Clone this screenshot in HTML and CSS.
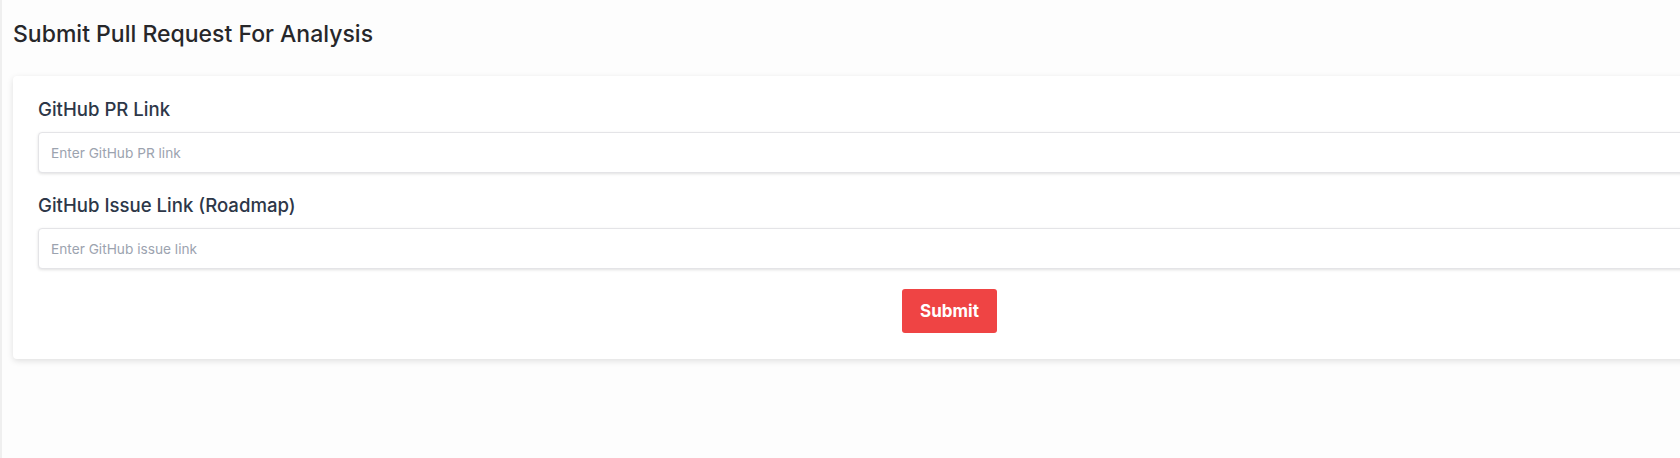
FILE: index.html
```html
<!DOCTYPE html>
<html>
<head>
<meta charset="utf-8">
<link rel="stylesheet" href="styles.css">
</head>
<body>
<div class="page">
  <h1 class="title">Submit Pull Request For Analysis</h1>
  <div class="card">
    <label class="label" for="pr">GitHub PR Link</label>
    <input class="input" id="pr" type="text" placeholder="Enter GitHub PR link">
    <label class="label label-second" for="issue">GitHub Issue Link (Roadmap)</label>
    <input class="input" id="issue" type="text" placeholder="Enter GitHub issue link">
    <div class="actions">
      <button class="btn" type="button">Submit</button>
    </div>
  </div>
</div>
</body>
</html>
```

FILE: styles.css
```css
html, body {
  margin: 0;
  padding: 0;
  background: #fdfdfd;
}
body {
  font-family: Inter, "Noto Sans", sans-serif;
  color: #1f2937;
  overflow: hidden;
}
.page {
  width: 1900px;
  min-height: 458px;
  box-sizing: border-box;
  border-left: 2px solid #efefef;
  padding: 19px 0 0 11px;
}
.title {
  margin: 0;
  font-size: 23px;
  line-height: 30px;
  font-weight: 500;
  color: #27272a;
}
.card {
  margin-top: 27px;
  width: 1873px;
  box-sizing: border-box;
  background: #ffffff;
  border-radius: 4px;
  box-shadow: 0 2px 6px rgba(0, 0, 0, 0.12);
  padding: 21px 25px 26px 25px;
  display: flex;
  flex-direction: column;
}
.label {
  font-size: 18.6px;
  line-height: 24px;
  font-weight: 500;
  color: #2d3748;
  margin-bottom: 11px;
}
.label-second {
  margin-top: 20px;
}
.input {
  height: 41px;
  box-sizing: border-box;
  border: 1px solid #e4e4e7;
  border-radius: 4px;
  box-shadow: 0 1px 3px rgba(0, 0, 0, 0.12);
  padding: 0 12px;
  font-family: Inter, "Noto Sans", sans-serif;
  font-size: 13.7px;
  color: #111827;
  background: #fff;
  outline: none;
}
.input::placeholder {
  color: #9ca3af;
}
.actions {
  display: flex;
  justify-content: center;
  margin-top: 20px;
}
.btn {
  width: 95px;
  height: 44px;
  border: none;
  border-radius: 3px;
  background: #ef4444;
  color: #ffffff;
  font-family: Inter, "Noto Sans", sans-serif;
  font-size: 17px;
  font-weight: 700;
  cursor: pointer;
}
```
